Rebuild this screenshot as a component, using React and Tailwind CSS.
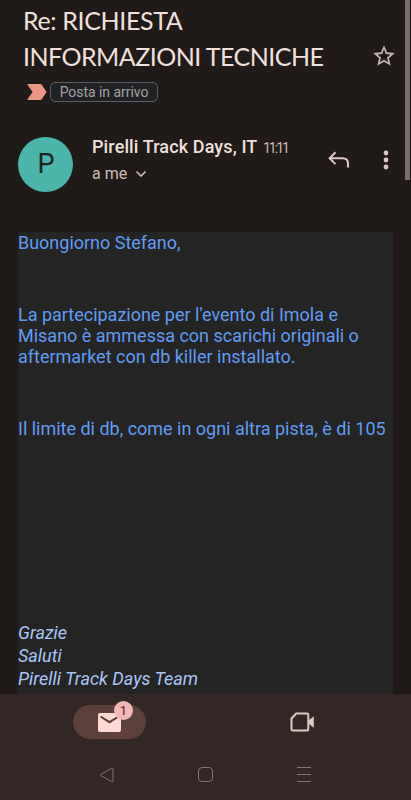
function Subject() {
    return (
        <div className="flex h-[78px] items-start">
            <h1 className="w-[348px] shrink-0 pl-[23px] pt-[2px] text-[25px] leading-[36px] font-normal whitespace-nowrap text-[#f1e0dc] font-['Lato',sans-serif]">
                <span className="block tracking-[-0.36px]">Re: RICHIESTA</span>
                <span className="block tracking-[-0.53px]">INFORMAZIONI TECNICHE</span>
            </h1>
            <svg viewBox="0 0 24 24" className="ml-[23px] mt-[43px] size-[26px] shrink-0 fill-[#c4b3ae]">
                <path d="M22 9.24l-7.19-.62L12 2 9.19 8.63 2 9.24l5.46 4.73L5.82 21 12 17.27 18.18 21l-1.63-7.03L22 9.24zM12 15.4l-3.76 2.27 1-4.28-3.32-2.88 4.38-.38L12 6.1l1.71 4.04 4.38.38-3.32 2.88 1 4.28L12 15.4z" />
            </svg>
        </div>
    );
}

function Labels() {
    return (
        <div className="flex h-[28px] items-center pl-[27px]">
            <svg viewBox="0 0 20 16" className="h-[16px] w-[20px] fill-[#ee9484]">
                <path d="M1 0h12.4q.8 0 1.3.7L19.6 8l-4.9 7.3q-.5.7-1.3.7H1q-1 0-.4-.9L5.6 8 .6.9Q0 0 1 0z" />
            </svg>
            <span className="ml-[3px] flex h-[20px] w-[108px] items-center justify-center rounded-[5px] border border-[#575c63] bg-[#202124] text-[14px] tracking-[-0.05px] text-[#a3a1a3]">
                Posta in arrivo
            </span>
        </div>
    );
}

function Sender() {
    return (
        <div className="flex h-[126px] items-start pl-[18px] pt-[31px]">
            <div className="flex size-[55px] shrink-0 items-center justify-center rounded-full bg-[#4db6ac] pl-px text-[27px] text-[#202124]">
                P
            </div>
            <div className="-mt-px ml-[18px] w-[237px] pl-px whitespace-nowrap">
                <div className="flex h-[22px] items-baseline">
                    <span className="w-[171px] text-[18px] leading-[22px] font-medium tracking-[0.12px] text-[#f1e0dc]">
                        Pirelli Track Days, IT
                    </span>
                    <span className="text-[14px] leading-[22px] tracking-[-2px] text-[#cfbcb7]">11:11</span>
                </div>
                <div className="mt-[6px] flex h-[20px] items-center text-[16px] text-[#cfbcb7]">
                    a me
                    <svg viewBox="0 0 12 8" className="ml-[8px] h-[8px] w-[12px] fill-none stroke-[#cfbcb7] stroke-[1.6]">
                        <path d="M1.500 1.500L6 6l4.500-4.500" />
                    </svg>
                </div>
            </div>
            <svg viewBox="0 0 22 18" className="-ml-px mt-[14px] h-[18px] w-[22px] shrink-0 fill-none stroke-[#dcc6c0] stroke-[2]">
                <path d="M8.500 1.300L2.600 7.200l5.900 5.900M2.800 7.200h12.700q5.500 0 5.500 5.300v4" />
            </svg>
            <svg viewBox="0 0 6 20" className="ml-[34px] mt-[13px] h-[20px] w-[6px] shrink-0 fill-[#dcc6c0]">
                <circle cx="3" cy="3" r="2.400" />
                <circle cx="3" cy="10" r="2.400" />
                <circle cx="3" cy="17" r="2.400" />
            </svg>
        </div>
    );
}

function Message() {
    return (
        <div className="ml-[18px] h-[462px] w-[375px] bg-[#242424] whitespace-nowrap text-[#609cf4]">
            <div className="text-[18px] leading-[21px] tracking-[-0.01px]">
                <p>Buongiorno Stefano,</p>
                <p className="mt-[51px]">
                    La partecipazione per l'evento di Imola e<br />
                    Misano è ammessa con scarichi originali o<br />
                    aftermarket con db killer installato.
                </p>
                <p className="mt-[51px]">Il limite di db, come in ogni altra pista, è di 105</p>
            </div>
            <div className="mt-[182px] text-[18px] leading-[23px] text-[#a9c5f8] italic">
                <p>Grazie</p>
                <p>Saluti</p>
                <p>Pirelli Track Days Team</p>
            </div>
        </div>
    );
}

function BottomNav() {
    return (
        <nav className="flex h-[56px] items-start pt-[11px]">
            <div className="relative ml-[73px] flex h-[34px] w-[73px] items-center justify-center rounded-full bg-[#5d403b]">
                <svg viewBox="0 0 23 19" className="h-[19px] w-[23px]">
                    <rect width="23" height="19" rx="2" className="fill-[#ffdad4]" />
                    <path d="M2.500 3.500l9 5.700 9-5.700" className="fill-none stroke-[#5d403b] stroke-[2]" />
                </svg>
                <span className="absolute left-[41px] top-[-4px] flex size-[19px] items-center justify-center rounded-full bg-[#f2b8b5] text-[13px] text-[#601410]">
                    1
                </span>
            </div>
            <svg viewBox="0 0 24 20" className="ml-[144px] mt-[7px] h-[20px] w-[24px]">
                <path
                    d="M6.200 1.500H17q1.300 0 1.300 1.300v14.400q0 1.300-1.300 1.300H2.800q-1.300 0-1.300-1.300V6.500z"
                    className="fill-none stroke-[#dfc9c3] stroke-[2]"
                />
                <path d="M18.500 8.500L23.800 4.300v11.400l-5.300-4.200z" className="fill-[#dfc9c3]" />
            </svg>
        </nav>
    );
}

function SystemBar() {
    return (
        <div className="flex h-[49px] items-center pl-[99px]">
            <svg viewBox="0 0 16 16" className="h-[16px] w-[16px] fill-none stroke-[#85736f] stroke-[1]">
                <path d="M2 7.300L12.800 1.300q1.200-.5 1.200.7v12q0 1.200-1.200.7L2 8.700q-1.200-.7 0-1.400z" />
            </svg>
            <div className="ml-[83px] size-[15px] rounded-[4px] border border-[#85736f]" />
            <div className="ml-[84px] flex h-[15px] w-[14px] flex-col justify-between">
                <div className="h-px bg-[#85736f]" />
                <div className="h-px bg-[#85736f]" />
                <div className="h-px bg-[#85736f]" />
            </div>
        </div>
    );
}

export default function App() {
    return (
        <div className="relative h-[800px] w-[411px] overflow-hidden bg-[#201a18] font-['Roboto',sans-serif]">
            <Subject />
            <Labels />
            <Sender />
            <Message />
            <div className="h-[106px] bg-[#322725]">
                <BottomNav />
                <SystemBar />
            </div>
            <div className="absolute top-0 left-[405px] h-[180px] w-[5px] bg-[#7b6e6a]" />
        </div>
    );
}
